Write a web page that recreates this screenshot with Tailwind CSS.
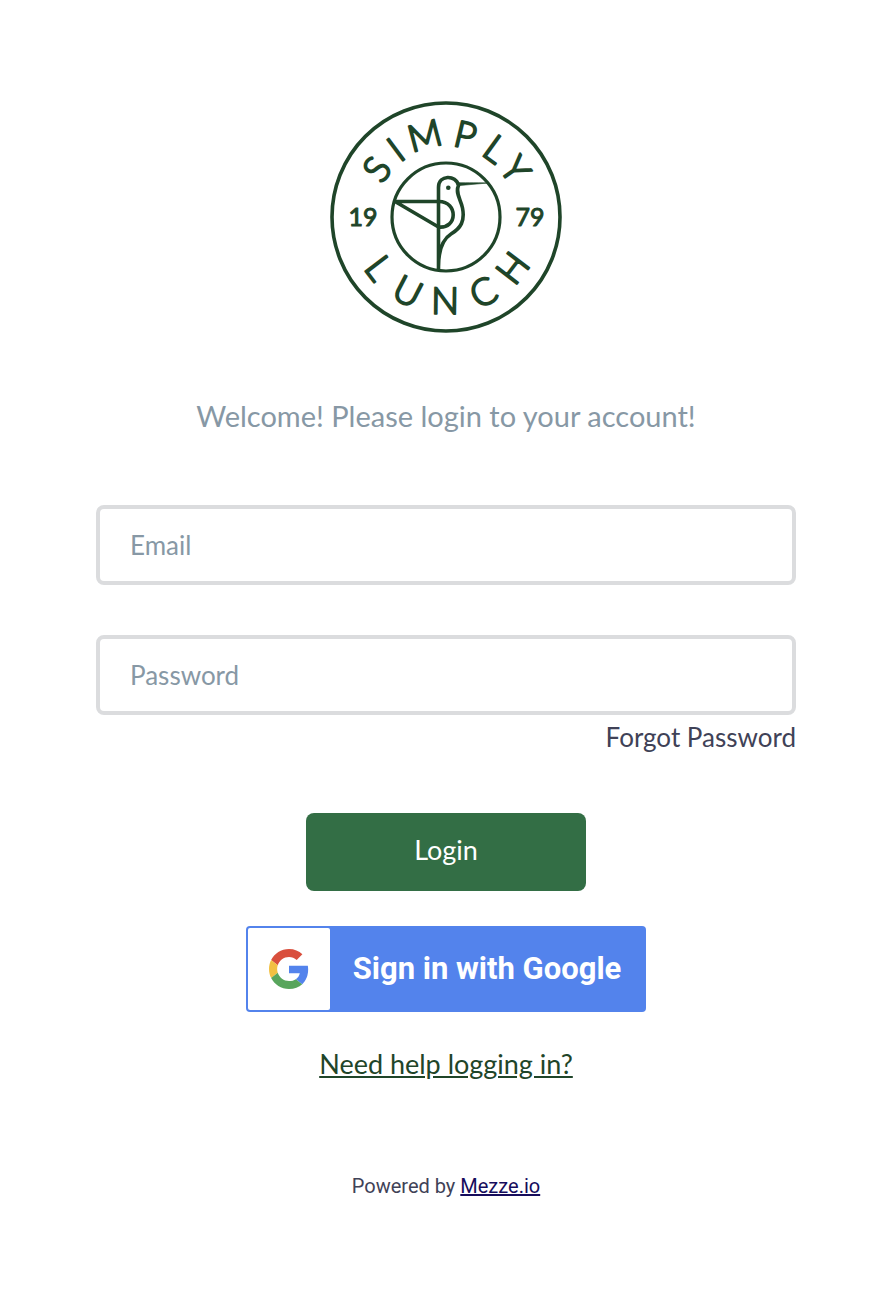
<!DOCTYPE html>
<html lang="en">
<head>
    <meta charset="UTF-8">
    <meta name="viewport" content="width=device-width, initial-scale=1.0">
    <title>Simply Lunch - Login</title>
    <script src="https://cdn.jsdelivr.net/npm/@tailwindcss/browser@4"></script>
</head>
<body class="bg-white min-h-screen pr-0.5 font-['Lato',sans-serif]">
    <main class="flex flex-col items-center px-24 pt-[100px] pb-20">
        <!-- round logo -->
        <svg class="w-[234px] h-[234px]" viewBox="329 100 234 234" fill="none" stroke="#1f4529" stroke-linecap="round" stroke-linejoin="round" role="img" aria-label="Simply Lunch 1979">
            <defs>
                <path id="topArc" d="M375 217A71 71 0 0 1 517 217"/>
                <path id="bottomArc" d="M349 217A97 97 0 0 0 543 217"/>
            </defs>
            <circle cx="446" cy="217" r="114" stroke-width="3.6"/>
            <circle cx="446" cy="217" r="54" stroke-width="3.2"/>
            <g fill="#1f4529" stroke-width="2" font-size="37" font-weight="300" text-anchor="middle">
                <text x="43 66 93 128 156 180"><textPath href="#topArc">SIMPLY</textPath></text>
                <text x="63 106 151 197 241"><textPath href="#bottomArc">LUNCH</textPath></text>
            </g>
            <g fill="#1f4529" stroke-width="1" font-size="25" text-anchor="middle">
                <text x="363" y="226">19</text>
                <text x="530" y="226">79</text>
            </g>
            <!-- hummingbird -->
            <g stroke-width="3.6">
                <path d="M438.5 269V187.5C438.5 174.500 456 174.500 458.5 185.500C455 193 461 200 462.5 208C465 221 461 228 451 234C443 239 438.5 249 438.5 267"/>
                <path d="M439 201.5H395L438.5 227C458 229 458 201.5 439 201.5"/>
            </g>
            <path d="M457 182.5C462 183 475 182.5 488 183L460 185.500Z" fill="#1f4529" stroke-width=".6"/>
            <circle cx="448.3" cy="187.8" r="2.3" fill="#1f4529" stroke="none"/>
        </svg>

        <h1 class="mt-16 text-[29px] leading-9 text-[#8798a5]">Welcome! Please login to your account!</h1>

        <form class="w-full mt-[71px] flex flex-col items-center">
            <input class="w-full h-20 px-[30px] border-4 border-[#dbdcde] rounded-lg text-[26px] text-[#3f4257] placeholder:text-[#8798a5]" type="email" aria-label="Email" placeholder="Email">
            <input class="w-full h-20 mt-[50px] px-[30px] border-4 border-[#dbdcde] rounded-lg text-[26px] text-[#3f4257] placeholder:text-[#8798a5]" type="password" aria-label="Password" placeholder="Password">
            <a class="self-end mt-1 text-[26px] leading-9 text-[#3f4257]" href="#">Forgot Password</a>
            <button class="w-[280px] h-[78px] mt-[58px] pb-1 rounded-lg bg-[#336e45] text-[27px] text-white" type="submit">Login</button>
            <button class="w-[400px] h-[86px] mt-[35px] p-0.5 flex items-center rounded bg-[#5383ec] font-['Roboto',sans-serif] text-white" type="button">
                <span class="w-[82px] h-[82px] flex items-center justify-center rounded-xs bg-white">
                    <svg class="w-10 h-10" viewBox="0 0 48 48">
                        <path fill="#d94f3d" d="M24 9.5c3.54 0 6.71 1.22 9.21 3.6l6.85-6.85C35.9 2.38 30.47 0 24 0 14.62 0 6.51 5.38 2.56 13.22l7.98 6.19C12.43 13.72 17.74 9.5 24 9.5z"/>
                        <path fill="#5383ec" d="M46.98 24.55c0-1.57-.15-3.09-.38-4.55H24v9.02h12.94c-.58 2.96-2.26 5.48-4.78 7.18l7.73 6c4.51-4.18 7.09-10.36 7.09-17.65z"/>
                        <path fill="#f2c042" d="M10.53 28.59c-.48-1.45-.76-2.99-.76-4.59s.27-3.14.76-4.59l-7.98-6.19C.92 16.46 0 20.12 0 24s.92 7.54 2.56 10.78l7.97-6.19z"/>
                        <path fill="#58a55c" d="M24 48c6.48 0 11.93-2.13 15.89-5.81l-7.73-6c-2.15 1.45-4.92 2.3-8.16 2.3-6.26 0-11.57-4.22-13.47-9.91l-7.98 6.19C6.51 42.62 14.62 48 24 48z"/>
                    </svg>
                </span>
                <span class="flex-1 text-center text-[31px] font-bold">Sign in with Google</span>
            </button>
        </form>

        <a class="mt-[34px] text-[27px] leading-9 text-[#1f4529] underline" href="#">Need help logging in?</a>
        <p class="mt-[90px] text-xl leading-7 text-[#3f4257] font-['Roboto',sans-serif]">Powered by <a class="text-[#160c5c] underline" href="#">Mezze.io</a></p>
    </main>
</body>
</html>
